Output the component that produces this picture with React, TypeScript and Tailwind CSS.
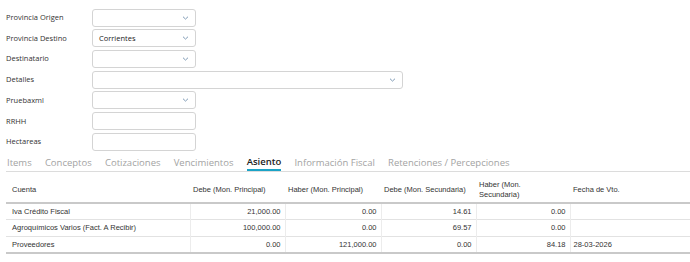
import React from 'react';

interface FieldRow {
  label: string;
  kind: 'select' | 'input';
  value?: string;
  wide?: boolean;
}

const fields: FieldRow[] = [
  { label: 'Provincia Origen', kind: 'select' },
  { label: 'Provincia Destino', kind: 'select', value: 'Corrientes' },
  { label: 'Destinatario', kind: 'select' },
  { label: 'Detalles', kind: 'select', wide: true },
  { label: 'Pruebaxml', kind: 'select' },
  { label: 'RRHH', kind: 'input' },
  { label: 'Hectareas', kind: 'input' },
];

const tabs = ['Items', 'Conceptos', 'Cotizaciones', 'Vencimientos', 'Asiento', 'Información Fiscal', 'Retenciones / Percepciones'];

const rows = [
  { cuenta: 'Iva Crédito Fiscal', debe: '21,000.00', haber: '0.00', debe2: '14.61', haber2: '0.00', fecha: '' },
  { cuenta: 'Agroquímicos Varios (Fact. A Recibir)', debe: '100,000.00', haber: '0.00', debe2: '69.57', haber2: '0.00', fecha: '' },
  { cuenta: 'Proveedores', debe: '0.00', haber: '121,000.00', debe2: '0.00', haber2: '84.18', fecha: '28-03-2026' },
];

const Chevron = () => (
  <svg width="7" height="5" viewBox="0 0 7 5" className="absolute right-[6px] top-1/2 -translate-y-1/2">
    <path d="M1 1.2 L3.5 3.6 L6 1.2" fill="none" stroke="#7f9ab5" strokeWidth="1" />
  </svg>
);

export default function App() {
  return (
    <div className="w-[690px] h-[262px] overflow-hidden bg-white" style={{ fontFamily: '"Open Sans", sans-serif' }}>
      {/* Form */}
      <div className="flex flex-col gap-[2.7px] pt-[8.7px] pl-[6px]">
        {fields.map((f) => (
          <div key={f.label} className="flex items-center h-[18px]">
            <div className="w-[86px] text-[7.5px] text-[#333]">{f.label}</div>
            <div
              className={`relative h-[18px] rounded-[3px] border border-[#d4d4d4] bg-white flex items-center pl-[6px] text-[7.5px] text-[#222] ${
                f.wide ? 'w-[311px]' : 'w-[104px]'
              }`}
            >
              {f.value}
              {f.kind === 'select' && <Chevron />}
            </div>
          </div>
        ))}
      </div>

      {/* Tabs */}
      <div className="mt-[4px] ml-[6px] flex items-end border-b border-[#dcdcdc] h-[17px]">
        {tabs.map((t, i) => (
          <div
            key={t}
            className={`h-full flex items-center mr-[13.2px] text-[9.5px] leading-none ${
              t === 'Asiento' ? 'font-semibold text-[#222] border-b-2 border-[#1ba3c6]' : 'text-[#a3a3a3]'
            } ${i === 0 ? 'ml-[1px]' : ''}`}
          >
            {t}
          </div>
        ))}
      </div>

      {/* Table */}
      <table
        className="mt-[6px] ml-[6px] w-[700px] border-collapse text-[7.5px] text-[#333]"
        style={{ fontFamily: '"Liberation Sans", Arial, sans-serif', tableLayout: 'fixed' }}
      >
        <colgroup>
          <col className="w-[184px]" />
          <col className="w-[95px]" />
          <col className="w-[96px]" />
          <col className="w-[95px]" />
          <col className="w-[94px]" />
          <col />
        </colgroup>
        <thead>
          <tr className="h-[25px] border-b-2 border-[#c9c9c9]">
            <th className="text-left font-normal px-[6px] align-middle">Cuenta</th>
            <th className="text-left font-normal px-[3px] align-middle">Debe (Mon. Principal)</th>
            <th className="text-left font-normal px-[3px] align-middle">Haber (Mon. Principal)</th>
            <th className="text-left font-normal px-[3px] align-middle">Debe (Mon. Secundaria)</th>
            <th className="text-left font-normal px-[3px] align-middle leading-[10px]">
              Haber (Mon.
              <br />
              Secundaria)
            </th>
            <th className="text-left font-normal px-[3px] align-middle">Fecha de Vto.</th>
          </tr>
        </thead>
        <tbody>
          {rows.map((r, i) => (
            <tr key={r.cuenta} className={`h-[16.7px] ${i < rows.length - 1 ? 'border-b border-[#e2e2e2]' : 'border-b-2 border-[#c9c9c9]'}`}>
              <td className="px-[6px] border-r border-[#ececec]">{r.cuenta}</td>
              <td className="px-[4px] text-right border-r border-[#ececec]">{r.debe}</td>
              <td className="px-[4px] text-right border-r border-[#ececec]">{r.haber}</td>
              <td className="px-[4px] text-right border-r border-[#ececec]">{r.debe2}</td>
              <td className="px-[4px] text-right border-r border-[#ececec]">{r.haber2}</td>
              <td className="px-[3px]">{r.fecha}</td>
            </tr>
          ))}
        </tbody>
      </table>
    </div>
  );
}
